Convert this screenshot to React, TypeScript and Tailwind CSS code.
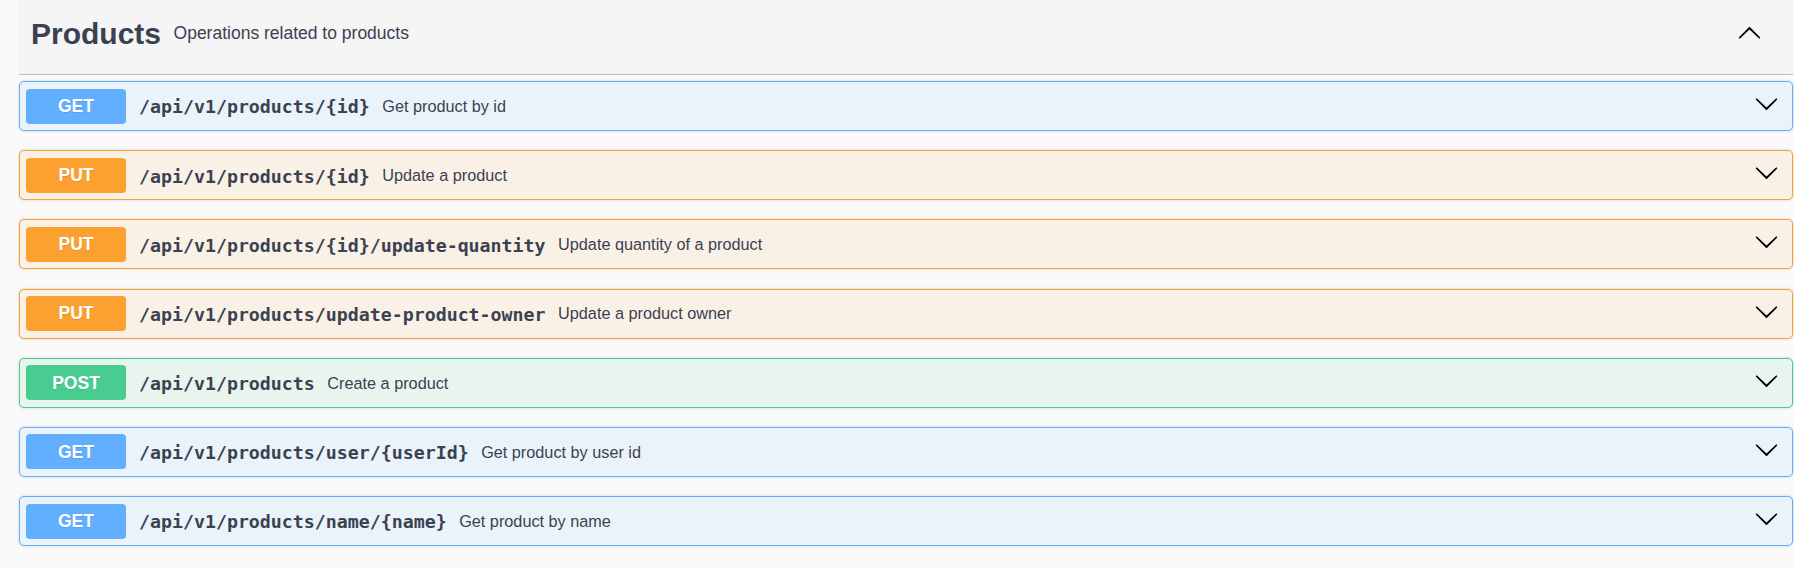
// Swagger-style tag section listing product endpoints
import React from 'react'

type Method = 'GET' | 'PUT' | 'POST'

type Operation = {
  method: Method
  path: string
  summary: string
}

const operations: Operation[] = [
  { method: 'GET', path: '/api/v1/products/{id}', summary: 'Get product by id' },
  { method: 'PUT', path: '/api/v1/products/{id}', summary: 'Update a product' },
  { method: 'PUT', path: '/api/v1/products/{id}/update-quantity', summary: 'Update quantity of a product' },
  { method: 'PUT', path: '/api/v1/products/update-product-owner', summary: 'Update a product owner' },
  { method: 'POST', path: '/api/v1/products', summary: 'Create a product' },
  { method: 'GET', path: '/api/v1/products/user/{userId}', summary: 'Get product by user id' },
  { method: 'GET', path: '/api/v1/products/name/{name}', summary: 'Get product by name' },
]

// full class strings per method so tailwind picks them up
const methodStyles: Record<Method, { row: string; badge: string }> = {
  GET: {
    row: 'bg-[#ebf3fa] border-[#61affe]',
    badge: 'bg-[#61affe]',
  },
  PUT: {
    row: 'bg-[#faf1e6] border-[#fca130]',
    badge: 'bg-[#fca130]',
  },
  POST: {
    row: 'bg-[#e8f5ef] border-[#49cc90]',
    badge: 'bg-[#49cc90]',
  },
}

function Arrow({ up = false, className = '' }: { up?: boolean; className?: string }) {
  return (
    <svg
      width="25"
      height="25"
      viewBox="0 0 20 20"
      className={className}
      style={up ? { transform: 'rotate(180deg)' } : undefined}
      aria-hidden="true"
    >
      <path
        fill="#000"
        d="M17.418 6.109c.272-.268.709-.268.979 0s.271.701 0 .969l-7.908 7.83c-.27.268-.707.268-.979 0l-7.908-7.83c-.27-.268-.27-.701 0-.969.271-.268.709-.268.979 0L10 13.25l7.418-7.141z"
      />
    </svg>
  )
}

function OperationRow({ op }: { op: Operation }) {
  const style = methodStyles[op.method]
  return (
    <div
      className={`flex h-[50px] items-center rounded-[5px] border pl-[6px] pr-[13px] shadow-[0_0_3px_rgba(0,0,0,0.19)] ${style.row}`}
    >
      <span
        className={`flex h-[35px] w-[100px] shrink-0 items-center justify-center rounded-[3.75px] text-[17.5px] font-bold text-white [text-shadow:0_1px_0_rgba(0,0,0,0.1)] ${style.badge}`}
      >
        {op.method}
      </span>
      <span className="pl-[13px] pr-[12.5px] pt-[2px] font-['DejaVu_Sans_Mono',monospace] text-[18.25px] font-bold text-[#3b4151]">
        {op.path}
      </span>
      <span className="flex-1 text-[16.25px] text-[#3b4151]">{op.summary}</span>
      <Arrow className="mb-[5px] shrink-0" />
    </div>
  )
}

export default function App() {
  return (
    <div className="min-h-screen bg-[#fafafa] pl-[19px] pr-[1px] font-['Liberation_Sans',Arial,sans-serif]">
      {/* Tag header */}
      <div className="flex h-[75px] items-center border-b border-[rgba(59,65,81,0.3)] bg-[#f5f5f5] pb-[8px] pl-[12px] pr-[31px] text-[#3b4151]">
        <h3 className="text-[30px] font-bold">Products</h3>
        <small className="flex-1 pl-[12.5px] pt-[1px] text-[17.5px]">Operations related to products</small>
        <Arrow up />
      </div>

      {/* Operations */}
      <div className="mt-[6px] flex flex-col gap-[19.2px]">
        {operations.map((op, i) => (
          <OperationRow key={i} op={op} />
        ))}
      </div>
    </div>
  )
}
